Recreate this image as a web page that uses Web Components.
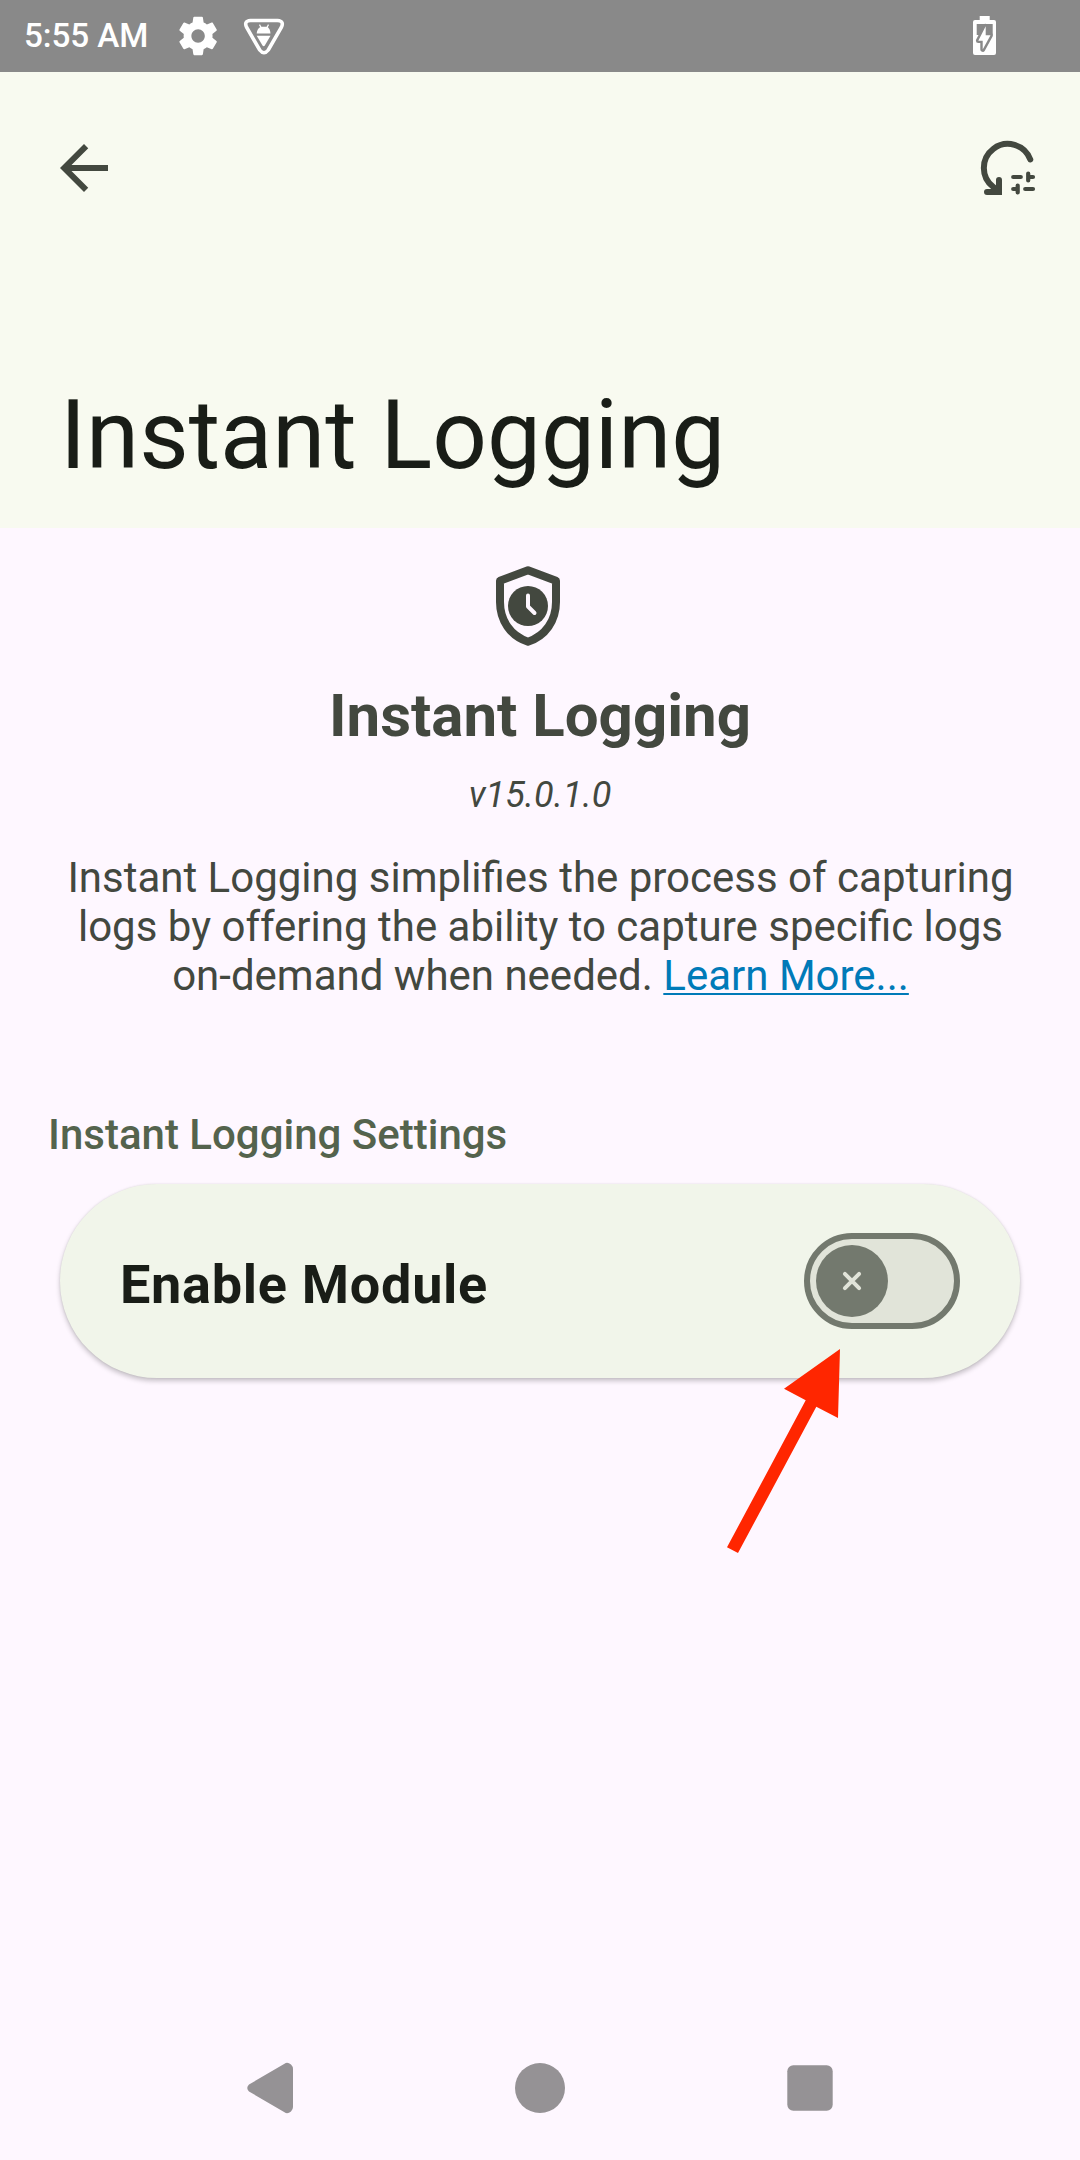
<!DOCTYPE html>
<html lang="en">
<head>
<meta charset="utf-8">
<title>Instant Logging</title>
<style>
html,body{margin:0;height:100%;background:#fef7ff}
body{font-family:Roboto,sans-serif;color:#43483f}
</style>
</head>
<body>
<module-screen></module-screen>
<script>
const define = (name, css, html) => customElements.define(name, class extends HTMLElement {
  constructor() {
    super();
    this.attachShadow({mode: 'open'}).innerHTML = `<style>*{box-sizing:border-box}svg{display:block}${css}</style>${html}`;
  }
});

define('status-bar', `
:host{display:flex;align-items:flex-start;height:72px;background:#898989;color:#fff}
.time{margin-left:24px;width:149px;font-size:33.3px;letter-spacing:-.1px;line-height:39px;padding-top:16px;font-weight:500;white-space:nowrap}
.sys{margin-left:auto;margin-right:78px}`, `
<span class="time">5:55 AM</span>
<svg width="120" height="72" viewBox="173 0 120 72" fill="#fff">
<path transform="translate(175 12.8) scale(1.925)" d="M19.43 12.98c.04-.32.07-.64.07-.98s-.03-.66-.07-.98l2.11-1.65c.19-.15.24-.42.12-.64l-2-3.46c-.12-.22-.39-.3-.61-.22l-2.49 1c-.52-.4-1.08-.73-1.69-.98l-.38-2.65C14.46 2.18 14.25 2 14 2h-4c-.25 0-.46.18-.49.42l-.38 2.65c-.61.25-1.17.59-1.69.98l-2.49-1c-.23-.09-.49 0-.61.22l-2 3.46c-.13.22-.07.49.12.64l2.11 1.65c-.04.32-.07.65-.07.98s.03.66.07.98l-2.11 1.65c-.19.15-.24.42-.12.64l2 3.46c.12.22.39.3.61.22l2.49-1c.52.4 1.08.73 1.69.98l.38 2.65c.03.24.24.42.49.42h4c.25 0 .46-.18.49-.42l.38-2.65c.61-.25 1.17-.59 1.69-.98l2.49 1c.23.09.49 0 .61-.22l2-3.46c.12-.22.07-.49-.12-.64l-2.11-1.65zM12 15.5c-1.93 0-3.5-1.57-3.5-3.5s1.57-3.5 3.5-3.5 3.5 1.57 3.5 3.5-1.57 3.5-3.5 3.5z"/>
<path d="M250.500 20.500H277.500Q284.500 21 281.300 27.500L268.300 50Q264 55.500 259.700 50L246.700 27.500Q243.500 21 250.500 20.500Z" fill="none" stroke="#fff" stroke-width="3.600"/>
<path d="M256.700 33.600Q257 28.500 261 26.800H267Q270.200 28.500 270.500 33.600Z"/>
<path d="M259.500 24.600L261.300 28M268.500 24.600L266.700 28" stroke="#fff" stroke-width="1.200"/>
<path d="M256.700 35.700H270.500L264.800 45.600Q263.700 47 262.500 45.600Z"/>
</svg>
<svg class="sys" width="30" height="72" viewBox="972 0 30 72">
<path fill="#fff" d="M979.700 16H989.700V20H994Q996 20 996 22V53Q996 55 994 55H975Q973 55 973 53V22Q973 20 975 20H979.700Z"/>
<path fill="#898989" d="M976.700 24H992.700V35H976.700Z"/>
<path d="M985.700 26.300V35.300H990.500L982.700 49.500V40.700H978.300Z" fill="#fff" stroke="#898989" stroke-width="4.800" stroke-linejoin="round" paint-order="stroke"/>
</svg>`);

define('app-header', `
:host{display:flex;flex-direction:column;justify-content:space-between;height:456px;background:#f8faf0}
.bar{display:flex;justify-content:space-between;padding:60px 36px 0 48px}
h1{margin:0;padding:0 0 37px 60px;font-size:96px;line-height:112px;font-weight:400;color:#191d17;white-space:nowrap}`, `
<div class="bar">
<svg width="72" height="72" viewBox="0 0 24 24" fill="#43483f"><path d="M20 11H7.830l5.590-5.590L12 4l-8 8 8 8 1.410-1.410L7.830 13H20v-2z"/></svg>
<svg width="72" height="72" viewBox="972 132 72 72" fill="none" stroke="#43483f" stroke-linecap="round">
<path stroke-width="6" d="M1030.300 159.500A24 24 0 1 0 993.500 187.200L998 191M999 180V192H987"/>
<path stroke-width="4.200" d="M1013.200 177H1020.800M1028.200 173.500V180.500M1028.200 177H1033M1017.700 185.500V192.500M1013.200 189H1017.700M1025.200 189H1033"/>
</svg>
</div>
<h1><slot></slot></h1>`);

define('module-intro', `
:host{display:flex;flex-direction:column;align-items:center;padding-top:24px;text-align:center}
.badge{margin-right:24px}
h2{margin:33px 0 0;font-size:60px;line-height:70px;font-weight:700;white-space:nowrap}
.ver{margin-top:23px;font-size:36px;line-height:42px;font-style:italic}
p{margin:37px 0 0;padding-left:1px;font-size:42px;line-height:49px;white-space:nowrap}`, `
<svg class="badge" width="96" height="96" viewBox="480 552 96 96">
<path d="M528 570.200L500 580.800V602C500 620.500 510.500 636 528 641.700C545.500 636 556 620.500 556 602V580.800Z" fill="none" stroke="#43483f" stroke-width="8" stroke-linejoin="round"/>
<circle cx="528" cy="606" r="20" fill="#43483f"/>
<path d="M528 595.500V606.500L534.500 613" fill="none" stroke="#fef7ff" stroke-width="4" stroke-linecap="round" stroke-linejoin="round"/>
</svg>
<h2><slot name="name"></slot></h2>
<div class="ver"><slot name="version"></slot></div>
<p><slot></slot></p>`);

define('toggle-switch', `
:host{display:flex;align-items:center;width:156px;height:96px;padding-left:6px;border:6px solid #73796e;border-radius:48px;background:#e1e4d9;box-sizing:border-box}`, `
<svg width="72" height="72" viewBox="0 0 72 72"><circle cx="36" cy="36" r="36" fill="#73796e"/><path d="M28.900 28.900L43.100 43.100M43.100 28.900L28.900 43.100" stroke="#e1e4d9" stroke-width="4" stroke-linecap="round"/></svg>`);

define('setting-card', `
:host{display:flex;align-items:center;justify-content:space-between;height:194px;margin:0 60px;padding:0 60px;border-radius:97px;background:#f1f5ea;box-shadow:0 3px 5px rgba(0,0,0,.22),0 0 2px rgba(0,0,0,.1);box-sizing:border-box;color:#191d17}
.label{font-size:54px;line-height:63px;font-weight:700;letter-spacing:.72px;padding-top:7px;white-space:nowrap}`, `
<span class="label"><slot></slot></span><toggle-switch></toggle-switch>`);

define('settings-group', `
:host{display:block;position:relative}
h3{margin:0 0 25px 48px;font-size:42px;line-height:49px;font-weight:500;color:#54634d;white-space:nowrap}
.pointer{position:absolute;left:720px;top:239px}`, `
<h3><slot name="title"></slot></h3><slot></slot>
<svg class="pointer" width="130" height="210" viewBox="720 1349 130 210" fill="#ff2600"><path d="M840 1349L784 1388.700L805.700 1400.300L727 1547.300L738 1553L816.300 1406.700L838 1418Z"/></svg>`);

define('nav-bar', `
:host{display:flex;justify-content:space-between;padding:0 234px 36px}`, `
<svg width="72" height="72" viewBox="234 2052 72 72" fill="#959295"><path d="M249 2084.500L284.500 2063.700Q287.500 2061.700 291 2064.500Q293 2066.500 293 2069V2107Q293 2109.500 291 2111.500Q287.500 2114.300 284.500 2112.300L249 2091.500Q245.500 2088 249 2084.500Z"/></svg>
<svg width="72" height="72" viewBox="504 2052 72 72" fill="#959295"><circle cx="540" cy="2088" r="25"/></svg>
<svg width="72" height="72" viewBox="774 2052 72 72" fill="#959295"><rect x="787.300" y="2065.300" width="45.400" height="45.400" rx="6"/></svg>`);

define('module-screen', `
:host{display:flex;flex-direction:column;height:2160px;width:1080px}
settings-group{margin-top:110px}
nav-bar{margin-top:auto}
a{color:#007ab8;text-decoration:underline;text-decoration-thickness:2px;text-underline-offset:3px;text-decoration-skip-ink:none}`, `
<status-bar></status-bar>
<app-header>Instant Logging</app-header>
<module-intro>
<span slot="name">Instant Logging</span><span slot="version">v15.0.1.0</span>
Instant Logging simplifies the process of capturing<br>logs by offering the ability to capture specific logs<br>on-demand when needed. <a>Learn More...</a>
</module-intro>
<settings-group><span slot="title">Instant Logging Settings</span><setting-card>Enable Module</setting-card></settings-group>
<nav-bar></nav-bar>`);
</script>
</body>
</html>
